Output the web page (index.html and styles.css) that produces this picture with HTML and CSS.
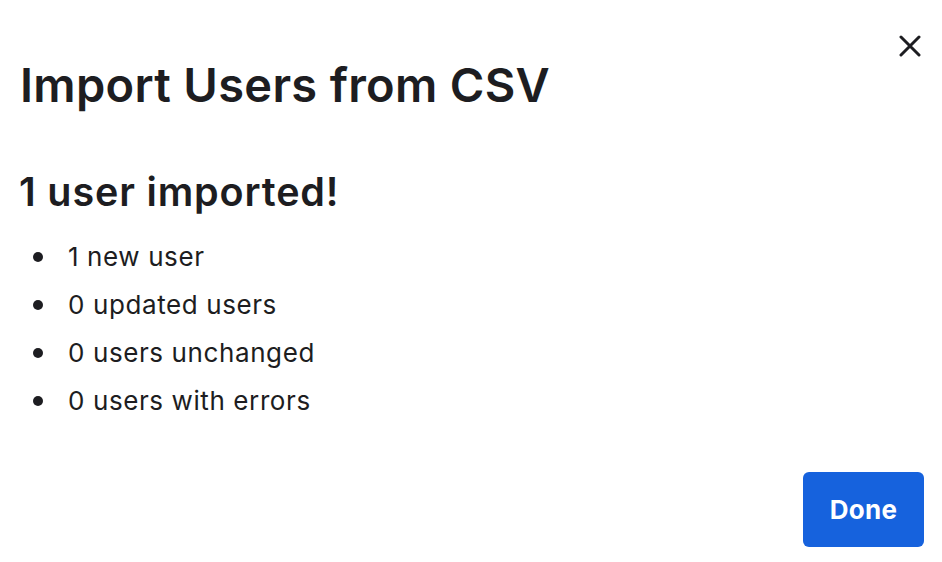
FILE: index.html
```html
<!DOCTYPE html>
<html lang="en">
<head>
<meta charset="utf-8">
<title>Import Users from CSV</title>
<link rel="stylesheet" href="styles.css">
</head>
<body>
<div class="modal">
  <button class="close" aria-label="Close">
    <svg width="22" height="22" viewBox="0 0 22 22" fill="none" stroke="#1d1d21" stroke-width="3" stroke-linecap="round">
      <path d="M2 2 L20 20 M20 2 L2 20"/>
    </svg>
  </button>
  <h1 class="title">Import Users from CSV</h1>
  <h2 class="subtitle">1 user imported!</h2>
  <ul class="stats">
    <li>1 new user</li>
    <li>0 updated users</li>
    <li>0 users unchanged</li>
    <li>0 users with errors</li>
  </ul>
  <div class="footer">
    <button class="done">Done</button>
  </div>
</div>
</body>
</html>
```
FILE: styles.css
```css
html, body {
  margin: 0;
  padding: 0;
  background: #ffffff;
}
body {
  font-family: Inter, "Noto Sans", sans-serif;
  color: #1d1d21;
}
.modal {
  position: relative;
  height: 562px;
  box-sizing: border-box;
  padding: 57px 18px 15px 20px;
  display: flex;
  flex-direction: column;
}
.close {
  position: absolute;
  top: 35px;
  right: 21px;
  width: 22px;
  height: 22px;
  padding: 0;
  border: 0;
  background: none;
  display: flex;
}
.title {
  margin: 0;
  font-size: 47px;
  line-height: 56px;
  font-weight: 600;
  letter-spacing: 0.3px;
}
.subtitle {
  margin: 56px 0 0 -1px;
  font-size: 39.5px;
  line-height: 47px;
  font-weight: 600;
  letter-spacing: 0.85px;
}
.stats {
  list-style: none;
  margin: 17px 0 0 0;
  padding: 0;
}
.stats li {
  display: flex;
  align-items: center;
  font-size: 26px;
  line-height: 48px;
  padding-left: 48px;
  letter-spacing: 0.6px;
  position: relative;
}
.stats li::before {
  content: "";
  position: absolute;
  left: 13px;
  top: 19px;
  width: 10px;
  height: 10px;
  border-radius: 50%;
  background: #1d1d21;
}
.footer {
  margin-top: auto;
  display: flex;
  justify-content: flex-end;
}
.done {
  width: 121px;
  height: 75px;
  border: 0;
  border-radius: 6px;
  background: #1662dd;
  color: #ffffff;
  font-family: Inter, "Noto Sans", sans-serif;
  font-size: 26px;
  font-weight: 700;
  letter-spacing: 0.3px;
}
```
